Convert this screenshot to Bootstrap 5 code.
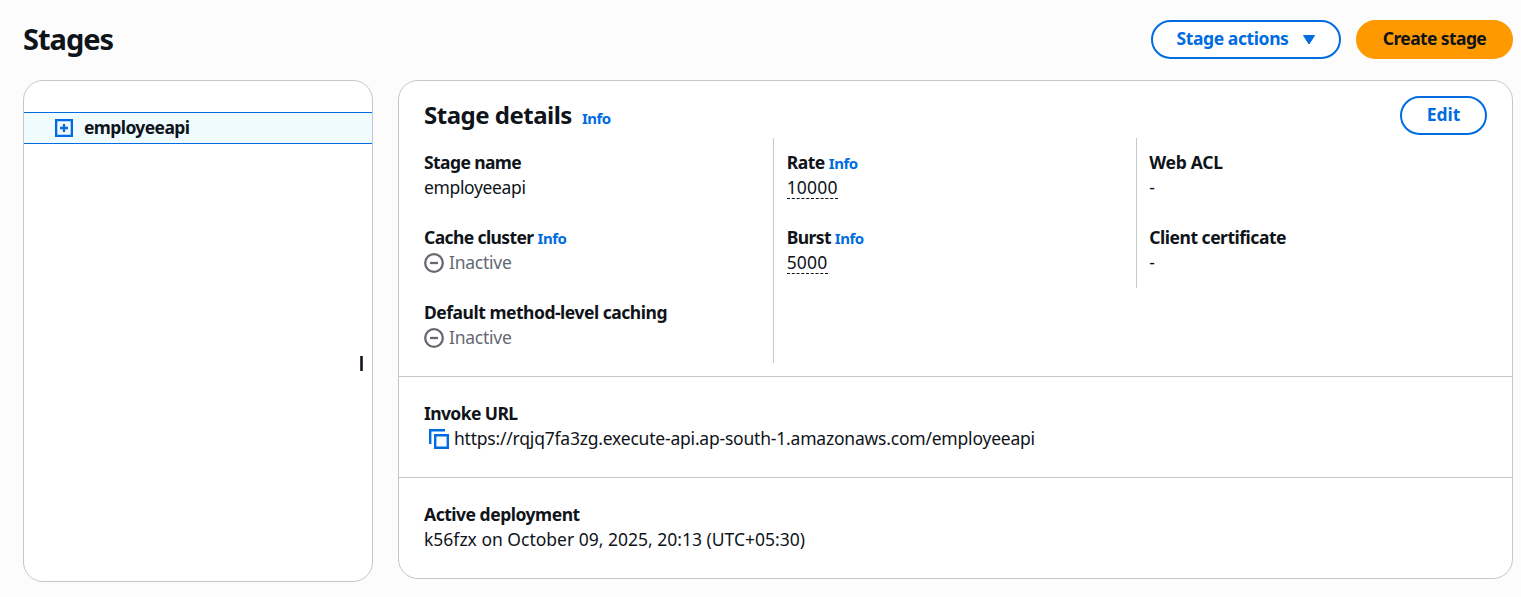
<!DOCTYPE html>
<html lang="en">
<head>
<meta charset="utf-8">
<meta name="viewport" content="width=device-width, initial-scale=1">
<title>Stages</title>
<link href="https://cdn.jsdelivr.net/npm/bootstrap@5.3.0/dist/css/bootstrap.min.css" rel="stylesheet">
<style>
  body { background: #fcfcfd; color: #0f141a; font-family: "Noto Sans", "Open Sans", sans-serif; font-size: 17.5px; line-height: 25px; overflow: hidden; }
  .page { padding: 20px 8px 0 23px; }
  .page-title { font-size: 29px; font-weight: 700; line-height: 38px; letter-spacing: -1px; }
  .btn-pill { height: 39px; border-radius: 25px; border: 2px solid #006ce0; background: #fff; color: #006ce0; font-size: 17.5px; font-weight: 700; line-height: 25px; padding: 4px 0 0; display: flex; justify-content: center; align-items: flex-start; }
  .btn-actions { width: 190px; letter-spacing: -.4px; }
  .btn-create { width: 157px; background: #ff9900; border-color: #ff9900; color: #0f141a; letter-spacing: -.6px; }
  .btn-edit { width: 87px; }
  .panel { background: #fff; border: 1px solid #c6c6cd; border-radius: 20px; }
  .tree-panel { width: 350px; height: 502px; padding-top: 31px; }
  .tree-item { height: 32px; background: #f0fbff; border: solid #006ce0; border-width: 1px 0; padding-left: 31px; font-weight: 700; letter-spacing: -.6px; }
  .tree-label { margin: 0 0 2px 11px; }
  .handle { width: 3px; height: 15px; background: #0f141a; border: solid #424650; border-width: 0 1px; margin: 2px 9px 0 0; }
  .details-panel { width: 1115px; height: 499px; }
  .section-main { height: 296px; padding: 15px 25px 0; border-bottom: 1px solid #c6c6cd; }
  .section-url { height: 101px; padding: 24px 25px 0; border-bottom: 1px solid #c6c6cd; }
  .section-deploy { padding: 24px 25px 0; }
  .panel-title { font-size: 24px; font-weight: 700; line-height: 38px; height: 39px; letter-spacing: -.5px; }
  .info-link { font-size: 15px; font-weight: 700; color: #006ce0; text-decoration: none; letter-spacing: -.5px; }
  .fields { margin: 3px -12.3px 0 -12.7px; }
  .fields > div { padding-left: 12.7px; }
  .fields > div:not(:last-child) { border-right: 1px solid #c6c6cd; }
  .field-item { height: 75px; padding-top: 12px; }
  .field-name { font-weight: 700; height: 25px; white-space: nowrap; letter-spacing: -.6px; }
  .field-name.roomy { letter-spacing: -.48px; }
  .field-name.web-acl { letter-spacing: -.3px; }
  .inactive { color: #656871; letter-spacing: -.25px; }
  .dashed { display: inline-block; height: 24px; border-bottom: 1px dashed #0f141a; letter-spacing: .2px; }
  .stage-name { letter-spacing: -.36px; }
  .invoke-url { letter-spacing: -.21px; }
</style>
</head>
<body>
<main class="page">
  <header class="d-flex align-items-start justify-content-between">
    <h1 class="page-title mb-0">Stages</h1>
    <div class="d-flex" style="gap:15px">
      <button class="btn btn-pill btn-actions"><span>Stage actions</span>
        <svg style="margin-left:13px" width="14" height="25" viewBox="0 0 14 25" fill="#006ce0"><path d="M1.500 9.500h11L7 18z" stroke="#006ce0" stroke-linejoin="round"/></svg>
      </button>
      <button class="btn btn-pill btn-create"><span>Create stage</span></button>
    </div>
  </header>
  <div class="d-flex align-items-start" style="gap:25px;margin-top:21px">
    <aside class="panel tree-panel d-flex flex-column">
      <div class="tree-item d-flex align-items-center">
        <svg width="18" height="18" viewBox="0 0 18 18" fill="none" stroke="#006ce0" stroke-width="2.300"><path d="M1.150 1.150h15.700v15.700H1.150z"/><path d="M5 9h8M9 5v8"/></svg>
        <span class="tree-label">employeeapi</span>
      </div>
      <div class="flex-grow-1 d-flex align-items-center justify-content-end"><div class="handle"></div></div>
    </aside>
    <section class="panel details-panel">
      <div class="section-main">
        <div class="d-flex justify-content-between">
          <h2 class="panel-title mb-0">Stage details<a class="info-link" style="margin-left:10px" href="#">Info</a></h2>
          <button class="btn btn-pill btn-edit"><span>Edit</span></button>
        </div>
        <div class="row g-0 align-items-start fields">
          <div class="col-4">
            <div class="field-item"><div class="field-name">Stage name</div><div class="stage-name">employeeapi</div></div>
            <div class="field-item"><div class="field-name">Cache cluster <a class="info-link" href="#">Info</a></div>
              <div class="inactive d-flex align-items-center"><svg style="margin-right:5px" width="20" height="20" viewBox="0 0 20 20" fill="none" stroke="#656871" stroke-width="2.300"><circle cx="10" cy="10" r="8.800"/><path d="M6 10h8"/></svg><span>Inactive</span></div></div>
            <div class="field-item"><div class="field-name roomy">Default method-level caching</div>
              <div class="inactive d-flex align-items-center"><svg style="margin-right:5px" width="20" height="20" viewBox="0 0 20 20" fill="none" stroke="#656871" stroke-width="2.300"><circle cx="10" cy="10" r="8.800"/><path d="M6 10h8"/></svg><span>Inactive</span></div></div>
          </div>
          <div class="col-4">
            <div class="field-item"><div class="field-name roomy">Rate <a class="info-link" href="#">Info</a></div><div><span class="dashed">10000</span></div></div>
            <div class="field-item"><div class="field-name">Burst <a class="info-link" href="#">Info</a></div><div><span class="dashed">5000</span></div></div>
          </div>
          <div class="col-4">
            <div class="field-item"><div class="field-name web-acl">Web ACL</div><div>-</div></div>
            <div class="field-item"><div class="field-name roomy">Client certificate</div><div>-</div></div>
          </div>
        </div>
      </div>
      <div class="section-url">
        <div class="field-name">Invoke URL</div>
        <div class="d-flex align-items-center"><svg style="margin:0 5px" width="20" height="20" viewBox="0 0 20 20" fill="none" stroke="#006ce0" stroke-width="2.400"><path d="M1.200 15V1.200H16M6.200 6.200h12.600v12.600H6.200z"/></svg><span class="invoke-url">https://rqjq7fa3zg.execute-api.ap-south-1.amazonaws.com/employeeapi</span></div>
      </div>
      <div class="section-deploy">
        <div class="field-name roomy">Active deployment</div>
        <div>k56fzx on October 09, 2025, 20:13 (UTC+05:30)</div>
      </div>
    </section>
  </div>
</main>
<script src="https://cdn.jsdelivr.net/npm/bootstrap@5.3.0/dist/js/bootstrap.bundle.min.js"></script>
</body>
</html>
